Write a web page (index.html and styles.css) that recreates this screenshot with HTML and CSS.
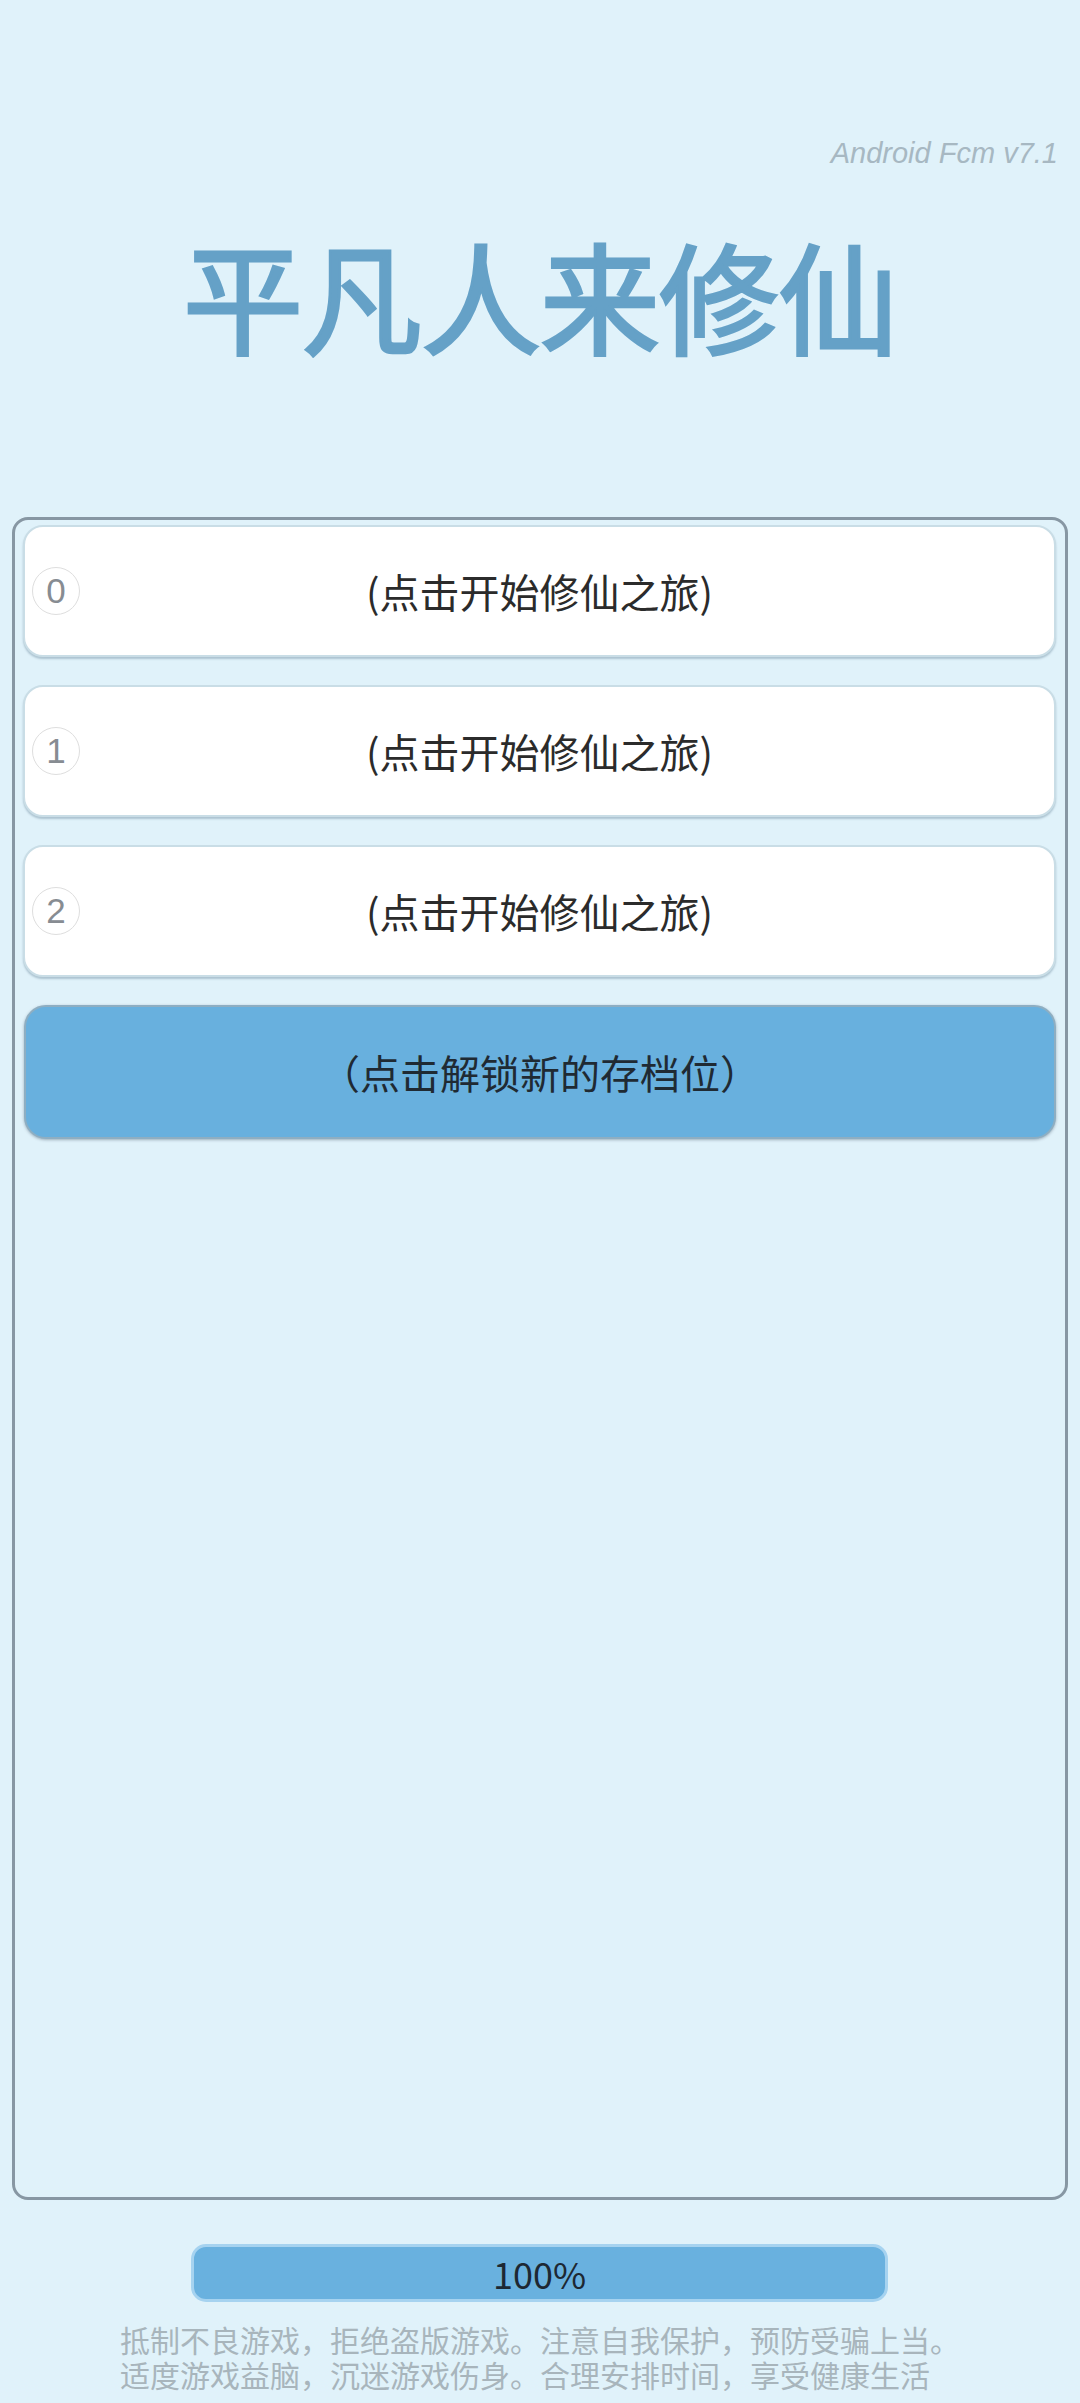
FILE: index.html
```html
<!DOCTYPE html>
<html lang="zh-CN">
<head>
<meta charset="utf-8">
<title>平凡人来修仙</title>
<link rel="stylesheet" href="styles.css">
</head>
<body>
  <header class="top">
    <div class="version">Android Fcm v7.1</div>
    <h1 class="title">平凡人来修仙</h1>
  </header>

  <main class="slots">
    <div class="slot">
      <span class="slot-no">0</span>
      <span class="slot-label">(点击开始修仙之旅)</span>
    </div>
    <div class="slot">
      <span class="slot-no">1</span>
      <span class="slot-label">(点击开始修仙之旅)</span>
    </div>
    <div class="slot">
      <span class="slot-no">2</span>
      <span class="slot-label">(点击开始修仙之旅)</span>
    </div>
    <div class="unlock">（点击解锁新的存档位）</div>
  </main>

  <div class="progress">100%</div>

  <footer class="notice">
    <div class="notice-line">抵制不良游戏，拒绝盗版游戏。注意自我保护，预防受骗上当。</div>
    <div class="notice-line">适度游戏益脑，沉迷游戏伤身。合理安排时间，享受健康生活</div>
  </footer>
</body>
</html>
```

FILE: styles.css
```css
html, body {
  margin: 0;
  padding: 0;
}

body {
  width: 1080px;
  height: 2403px;
  overflow: hidden;
  background: #e0f2fa;
  font-family: "Noto Sans CJK SC", "Noto Sans", sans-serif;
  display: flex;
  flex-direction: column;
}

/* header: version tag + game title */
.top {
  display: flex;
  flex-direction: column;
}

.version {
  margin-top: 136px;
  padding-right: 22px;
  text-align: right;
  font-family: "Liberation Sans", Arial, sans-serif;
  font-style: italic;
  font-size: 29px;
  line-height: 34px;
  color: #a7b8c2;
}

.title {
  margin: 64px 0 0;
  text-align: center;
  font-size: 120px;
  line-height: 120px;
  font-weight: 400;
  -webkit-text-stroke: 3px #65a1c7;
  color: #65a1c7;
  letter-spacing: -1px;
}

/* save slot panel */
.slots {
  box-sizing: border-box;
  margin: 163px 12px 0;
  height: 1683px;
  border: 3px solid #8797a3;
  border-radius: 16px;
  padding: 5px 9px 0 8px;
  display: flex;
  flex-direction: column;
  gap: 28px;
}

.slot {
  box-sizing: border-box;
  height: 132px;
  background: #ffffff;
  border: 2px solid #c9dde6;
  border-radius: 20px;
  box-shadow: 0 2px 2px rgba(110, 140, 160, 0.45);
  display: grid;
  grid-template-columns: 1fr auto 1fr;
  align-items: center;
  padding-left: 7px;
}

.slot-no {
  justify-self: start;
  box-sizing: border-box;
  width: 48px;
  height: 48px;
  border: 1.5px solid #dedede;
  border-radius: 50%;
  display: flex;
  align-items: center;
  justify-content: center;
  font-family: "Liberation Sans", Arial, sans-serif;
  font-size: 35px;
  color: #878c92;
}

.slot-label {
  font-size: 40px;
  color: #2b2b2b;
  margin-right: 7px;
}

.unlock {
  box-sizing: border-box;
  height: 134px;
  margin-left: 1px;
  background: #68b0de;
  border: 2px solid #8eaec2;
  border-radius: 22px;
  box-shadow: 0 1px 3px rgba(70, 90, 110, 0.45);
  display: flex;
  align-items: center;
  justify-content: center;
  font-size: 40px;
  color: #1f2a33;
}

/* loading bar */
.progress {
  box-sizing: border-box;
  align-self: center;
  margin-top: 44px;
  width: 697px;
  height: 58px;
  background: #69b1df;
  border: 3px solid #a6d3f0;
  border-radius: 15px;
  display: flex;
  align-items: center;
  justify-content: center;
  font-size: 36px;
  color: #1d2833;
  margin-left: -1px;
}

/* health advisory */
.notice {
  align-self: center;
  width: 840px;
  margin-top: 22px;
  font-family: "Liberation Sans", "Noto Sans CJK SC", sans-serif;
  font-size: 30px;
  color: #a8b5bc;
  white-space: nowrap;
}

.notice-line {
  height: 35px;
  line-height: 35px;
}
```
